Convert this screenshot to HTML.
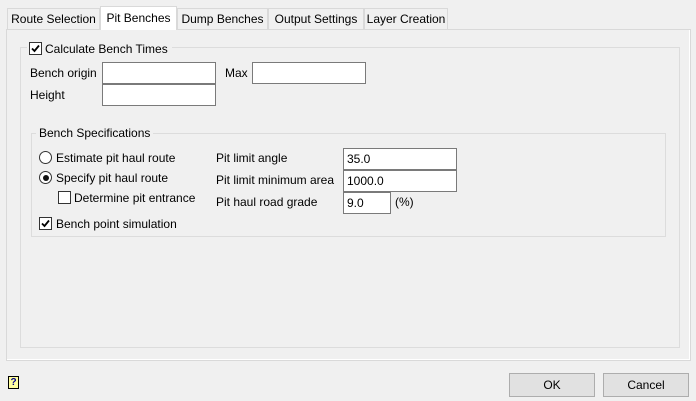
<html><head><style>
body{margin:0;width:696px;height:401px;background:#f0f0f0;font-family:"Liberation Sans",sans-serif;font-size:12px;color:#000;position:relative;overflow:hidden}
.a{position:absolute}
.tab{position:absolute;top:8px;height:21px;border:1px solid #d9d9d9;border-bottom:none;background:#f0f0f0;box-sizing:border-box;line-height:20px;text-align:center}
.in{position:absolute;background:#fff;border:1px solid #7a7a7a;box-sizing:border-box;height:22px;line-height:20px;padding-left:3px}
.cb{position:absolute;width:13px;height:13px;border:1px solid #333;background:#fff;box-sizing:border-box}
.cb svg{position:absolute;left:0;top:0}
.rb{position:absolute;width:13px;height:13px;border:1px solid #333;border-radius:50%;background:#fff;box-sizing:border-box}
.btn{position:absolute;top:373px;width:86px;height:24px;border:1px solid #adadad;background:#e1e1e1;box-sizing:border-box;text-align:center;line-height:22px}
</style></head><body>
<div class="a" style="left:6px;top:29px;width:685px;height:332px;border:1px solid #d9d9d9;box-sizing:border-box;background:#f0f0f0"></div>
<div class="a" style="left:7px;top:30px;width:683px;height:330px;border-right:1px solid #fff;border-bottom:1px solid #fff;box-sizing:border-box"></div>
<div class="tab" style="left:7px;width:93px">Route Selection</div>
<div class="tab" style="left:100px;top:6px;height:24px;width:77px;background:#fff;border-color:#d9d9d9;line-height:22px">Pit Benches</div>
<div class="tab" style="left:177px;width:91px">Dump Benches</div>
<div class="tab" style="left:268px;width:96px">Output Settings</div>
<div class="tab" style="left:364px;width:84px">Layer Creation</div>
<div class="a" style="left:20px;top:47px;width:660px;height:301px;border:1px solid #dcdcdc;box-sizing:border-box"></div>
<div class="a" style="left:27px;top:41px;width:145px;height:14px;background:#f0f0f0"></div>
<div class="cb" style="left:29px;top:42px"><svg width="11" height="11"><path d="M2 5.5 L4.5 8 L9 2.5" stroke="#000" stroke-width="1.8" fill="none"/></svg></div>
<div class="a" style="left:45px;top:42px">Calculate Bench Times</div>
<div class="a" style="left:30px;top:66px">Bench origin</div>
<div class="in" style="left:102px;top:62px;width:114px"></div>
<div class="a" style="left:225px;top:66px">Max</div>
<div class="in" style="left:252px;top:62px;width:114px"></div>
<div class="a" style="left:30px;top:88px">Height</div>
<div class="in" style="left:102px;top:84px;width:114px"></div>
<div class="a" style="left:31px;top:133px;width:635px;height:104px;border:1px solid #dcdcdc;box-sizing:border-box"></div>
<div class="a" style="left:36px;top:126px;padding:0 3px;background:#f0f0f0">Bench Specifications</div>
<div class="rb" style="left:39px;top:151px"></div>
<div class="a" style="left:56px;top:151px">Estimate pit haul route</div>
<div class="rb" style="left:39px;top:171px"></div><div class="a" style="left:42.5px;top:174.5px;width:6px;height:6px;border-radius:50%;background:#111"></div>
<div class="a" style="left:56px;top:171px">Specify pit haul route</div>
<div class="cb" style="left:58px;top:191px"></div>
<div class="a" style="left:74px;top:191px">Determine pit entrance</div>
<div class="cb" style="left:39px;top:217px"><svg width="11" height="11"><path d="M2 5.5 L4.5 8 L9 2.5" stroke="#000" stroke-width="1.8" fill="none"/></svg></div>
<div class="a" style="left:56px;top:217px">Bench point simulation</div>
<div class="a" style="left:216px;top:151px">Pit limit angle</div>
<div class="in" style="left:343px;top:148px;width:114px">35.0</div>
<div class="a" style="left:216px;top:173px">Pit limit minimum area</div>
<div class="in" style="left:343px;top:170px;width:114px">1000.0</div>
<div class="a" style="left:216px;top:195px">Pit haul road grade</div>
<div class="in" style="left:343px;top:192px;width:48px">9.0</div>
<div class="a" style="left:395px;top:195px">(%)</div>
<div class="a" style="left:8px;top:376px;width:11px;height:13px;border:1px solid #000;background:#ffffa0;box-sizing:border-box;font-size:10px;font-weight:bold;color:#00008b;text-align:center;line-height:11px">?</div>
<div class="btn" style="left:509px">OK</div>
<div class="btn" style="left:603px">Cancel</div>
</body></html>
